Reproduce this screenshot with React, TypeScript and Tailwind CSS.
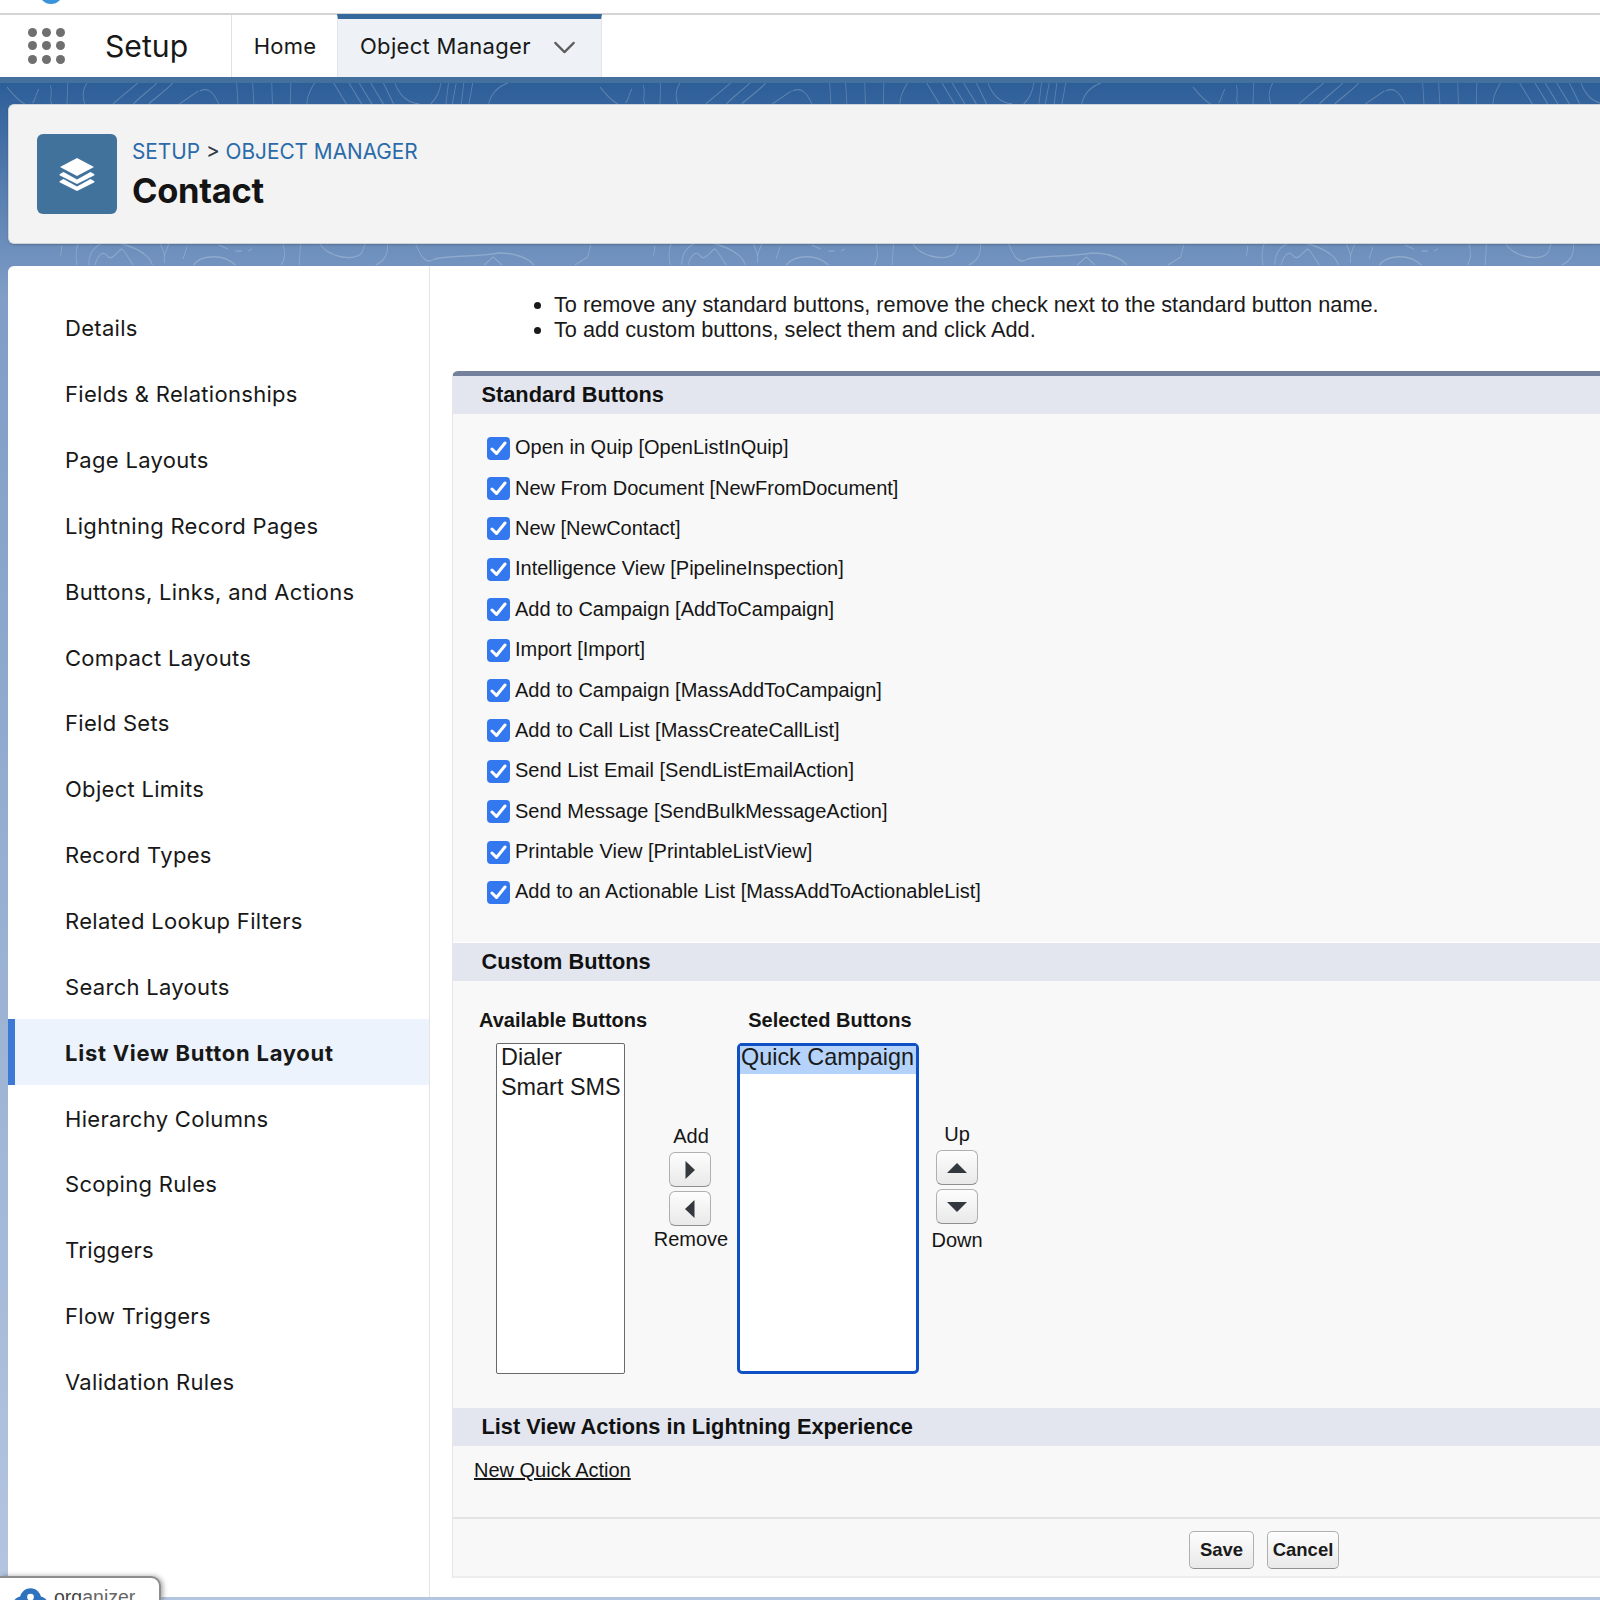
import { ChevronDown } from "lucide-react";

const SANS = "font-['Inter','Noto_Sans',sans-serif]";
const ARIAL = "font-['Liberation_Sans',Arial,sans-serif]";

const SIDE_ITEMS = [
  "Details",
  "Fields & Relationships",
  "Page Layouts",
  "Lightning Record Pages",
  "Buttons, Links, and Actions",
  "Compact Layouts",
  "Field Sets",
  "Object Limits",
  "Record Types",
  "Related Lookup Filters",
  "Search Layouts",
  "List View Button Layout",
  "Hierarchy Columns",
  "Scoping Rules",
  "Triggers",
  "Flow Triggers",
  "Validation Rules",
];

const STANDARD = [
  "Open in Quip [OpenListInQuip]",
  "New From Document [NewFromDocument]",
  "New [NewContact]",
  "Intelligence View [PipelineInspection]",
  "Add to Campaign [AddToCampaign]",
  "Import [Import]",
  "Add to Campaign [MassAddToCampaign]",
  "Add to Call List [MassCreateCallList]",
  "Send List Email [SendListEmailAction]",
  "Send Message [SendBulkMessageAction]",
  "Printable View [PrintableListView]",
  "Add to an Actionable List [MassAddToActionableList]",
];

// contour lines behind the header. one tile is 930 wide, squeezed and repeated along each band
const TOPO_TOP = [
  "M0 4 C10 12 18 18 28 21",
  "M50 6 C44 12 46 16 40 20",
  "M68 2 C72 10 66 16 70 21",
  "M95 0 L94 21",
  "M125 0 C118 8 118 14 122 21",
  "M205 0 C190 8 178 14 166 21",
  "M235 0 C222 8 208 14 198 21",
  "M260 0 C248 8 234 14 222 21",
  "M300 8 C290 12 282 16 270 21",
  "M302 8 C312 5 322 6 332 21",
  "M360 0 L362 21",
  "M385 0 L387 21",
  "M415 0 L416 21",
  "M445 0 L444 21",
  "M482 0 C474 8 470 14 470 21",
  "M512 0 L532 21",
  "M536 0 L556 21",
  "M552 0 L572 21",
  "M570 0 L590 21",
  "M590 0 L606 21",
  "M608 0 C616 14 630 20 646 21",
  "M680 0 C678 10 672 16 664 21",
  "M692 0 L688 21",
  "M704 0 L698 21",
  "M716 0 L712 21",
  "M730 0 L724 21",
  "M785 0 C768 4 758 12 755 21",
];
const TOPO_BOTTOM = [
  "M86 3 L84 13",
  "M112 0 C106 8 108 16 110 22",
  "M128 22 C128 4 150 -4 175 0 C200 4 222 10 228 22",
  "M138 22 C142 12 150 8 156 12 C164 20 172 8 180 6 C188 10 190 16 198 22",
  "M240 0 L247 12 L254 0",
  "M247 12 L247 20",
  "M282 4 L276 16",
  "M332 2 L346 6",
  "M358 8 L368 8",
  "M378 8 L384 6",
  "M292 22 C304 12 338 10 358 22",
  "M432 0 C436 8 436 16 430 22",
  "M460 0 L458 22",
  "M490 0 C498 12 540 20 556 10 L562 0",
  "M596 0 C598 10 592 18 578 22",
  "M640 0 C648 14 658 22 670 16 C700 12 740 14 770 10 C800 10 818 16 826 22",
  "M748 22 L762 14 L776 22",
  "M915 2 L910 14 L890 22",
];

function TopoLines() {
  return (
    <svg className="absolute inset-0" width="1600" height="190" fill="none" stroke="#ffffff" strokeOpacity="0.22" strokeWidth="1.3">
      {[-2, -1, 0, 1].map((k) => (
        <g key={k} transform={`translate(${600 + k * 593} 0) scale(0.638 1)`}>
          {TOPO_TOP.map((d) => <path key={d} d={d} />)}
          <g transform="translate(0 160)">
            {TOPO_BOTTOM.map((d) => <path key={d} d={d} />)}
          </g>
        </g>
      ))}
    </svg>
  );
}

function AppDots() {
  return (
    <div className="grid w-[37px] grid-cols-3 gap-x-[5px] gap-y-[4.5px]">
      {Array.from({ length: 9 }).map((_, i) => (
        <span key={i} className="h-[9px] w-[9px] rounded-full bg-[#6f6f6f]" />
      ))}
    </div>
  );
}

function TopNav() {
  return (
    <div className={`${SANS} relative z-10 flex h-[63px] items-stretch bg-white text-[#181818]`}>
      <div className="flex w-[232px] items-center border-r border-[#e2e2e2]">
        <div className="ml-[28px]"><AppDots /></div>
        <span className="ml-[40px] pt-[1px] text-[30.2px] leading-none">Setup</span>
      </div>
      <div className="flex w-[105px] items-center justify-center pt-[2px] pl-[1px] text-[22px] tracking-[0.2px]">Home</div>
      <div className="-mt-[1px] flex w-[265px] items-center border-x border-t-[5px] border-x-[#e2e5ea] border-t-[#34699c] bg-[#eef1f5] pb-[3px] pl-[22px] text-[22px] tracking-[0.3px]">
        <span>Object Manager</span>
        <ChevronDown className="ml-[15px] mt-[2px] shrink-0 text-[#5c5c5c]" size={37} strokeWidth={1.4} />
      </div>
    </div>
  );
}

function PageHeader() {
  return (
    <div className="flex h-[140px] items-center rounded-l-[6px] border border-r-0 border-[#cfd4da] bg-[#f3f3f3] pl-[28px] shadow-[0_1px_2px_rgba(0,0,0,0.2)]">
      <div className="flex h-[80px] w-[80px] items-center justify-center rounded-[6px] bg-[#41729c]">
        <svg width="36" height="34" viewBox="0 0 36 34" fill="#ffffff">
          <path d="M18 1 L35 10 L18 19 L1 10 Z" />
          <path d="M4.5 15 L1 17 C0.4 17.4 0.4 18.2 1 18.6 L18 27 L35 18.6 C35.6 18.2 35.6 17.4 35 17 L31.5 15 L18 22.5 Z" />
          <path d="M4.5 22 L1 24 C0.4 24.4 0.4 25.2 1 25.6 L18 34 L35 25.6 C35.6 25.2 35.6 24.4 35 24 L31.5 22 L18 29.5 Z" />
        </svg>
      </div>
      <div className={`${SANS} ml-[15px] pt-[2px]`}>
        <div className="text-[20.8px] leading-[26px] text-[#2f3b45]">
          <span className="text-[#2a6aa8]">SETUP</span> &gt; <span className="text-[#2a6aa8]">OBJECT MANAGER</span>
        </div>
        <h1 className="mt-[6px] text-[34.5px] font-bold leading-[40px] tracking-[-0.3px] text-[#141414]">Contact</h1>
      </div>
    </div>
  );
}

function Sidebar() {
  return (
    <nav className={`${SANS} w-[422px] shrink-0 border-r border-[#e4e4e4] pt-[30px] text-[22px] text-[#181818]`}>
      {SIDE_ITEMS.map((item) => {
        const active = item === "List View Button Layout";
        return (
          <div
            key={item}
            className={
              active
                ? "-mt-[1px] mb-[1px] flex h-[65.85px] items-center border-l-[7px] border-[#3b79d4] bg-[#ecf3fd] pl-[50px] pt-[2px] font-bold tracking-[0.74px]"
                : "flex h-[65.85px] items-center pl-[57px] tracking-[0.3px]"
            }
          >
            {item}
          </div>
        );
      })}
    </nav>
  );
}

function SectionHead({ title }: { title: string }) {
  return (
    <div className="flex h-[38px] items-center bg-[#e3e6ef] pl-[28.5px] text-[21.75px] font-bold text-[#111111]">
      {title}
    </div>
  );
}

function CheckRow({ label }: { label: string }) {
  return (
    <div className="flex h-[40.4px] items-center pl-[34px]">
      <span className="flex h-[23px] w-[23px] items-center justify-center rounded-[4px] bg-[#3478f0]">
        <svg width="17" height="15" viewBox="0 0 17 15" fill="none" stroke="#ffffff" strokeWidth="3" strokeLinecap="round" strokeLinejoin="round">
          <path d="M2 8 L6.5 12.5 L15 2" />
        </svg>
      </span>
      <span className="ml-[5px] -translate-y-[1px] text-[20px] text-[#151515]">{label}</span>
    </div>
  );
}

function ArrowBtn({ d }: { d: string }) {
  return (
    <div className="flex h-[35px] w-[42px] items-center justify-center rounded-[6px] border-[1.5px] border-[#b0b0b0] border-b-[#8f8f8f] bg-gradient-to-b from-[#fdfdfd] to-[#e9e9e9]">
      <svg width="24" height="24" viewBox="0 0 24 24" fill="#33383e"><path d={d} /></svg>
    </div>
  );
}

function CustomButtons() {
  return (
    <div className="h-[427px] text-[#151515]">
      <div className="flex pt-[27px] text-[20px] font-bold leading-[24px]">
        <span className="ml-[26px]">Available Buttons</span>
        <span className="ml-[101px]">Selected Buttons</span>
      </div>
      <div className="mt-[11px] flex items-start">
        <div className="ml-[43px] h-[331px] w-[129px] shrink-0 rounded-[2px] border-[1.5px] border-[#6a6a6a] bg-white pl-[4px] text-[23.4px] leading-[29.5px] text-[#1a1a1a]">
          <div className="-mt-[1px]">Dialer</div>
          <div className="whitespace-nowrap">Smart SMS</div>
        </div>
        <div className="flex w-[112px] shrink-0 flex-col items-center pl-[20px] pt-[81px] text-[20px] leading-[24px]">
          <span>Add</span>
          <div className="mt-[4px] mb-[4px] -translate-x-[1px]"><ArrowBtn d="M7.5 3 L17 12 L7.5 21 Z" /></div>
          <div className="-translate-x-[1px]"><ArrowBtn d="M16.5 3 L7 12 L16.5 21 Z" /></div>
          <span className="mt-[1px]">Remove</span>
        </div>
        <div className="h-[331px] w-[182px] shrink-0 rounded-[5px] border-[3px] border-[#0f50c4] bg-white text-[23.4px] leading-[23px] text-[#1a1a1a]">
          <div className="whitespace-nowrap bg-[#b5d3fa] pb-[5px] pl-[1px]">Quick Campaign</div>
        </div>
        <div className="ml-[17px] flex w-[42px] shrink-0 flex-col items-center pt-[79px] text-[20px] leading-[24px]">
          <span>Up</span>
          <div className="mt-[4px] mb-[4px]"><ArrowBtn d="M2 17 L12 7 L22 17 Z" /></div>
          <ArrowBtn d="M2 7 L12 17 L22 7 Z" />
          <span className="mt-[4px]">Down</span>
        </div>
      </div>
    </div>
  );
}

function FooterBtn({ label, width }: { label: string; width: string }) {
  return (
    <div className={`${width} flex h-[38px] items-center justify-center rounded-[5px] border-[1.5px] border-[#b0b0b0] border-b-[#8f8f8f] bg-gradient-to-b from-[#fdfdfd] to-[#e9e9e9] text-[18.5px] font-bold text-[#1a1a1a]`}>
      {label}
    </div>
  );
}

function ButtonLayoutForm() {
  return (
    <div className={`${ARIAL} flex-1 pl-[22px]`}>
      <ul className="h-[105px] list-disc pl-[102px] pt-[26px] text-[21.73px] leading-[25px] text-[#1a1a1a]">
        <li>To remove any standard buttons, remove the check next to the standard button name.</li>
        <li>To add custom buttons, select them and click Add.</li>
      </ul>
      <div className="rounded-tl-[6px] border-l border-t-[5px] border-l-[#e6e6e6] border-t-[#75809c] bg-[#f8f8f8]">
        <SectionHead title="Standard Buttons" />
        <div className="h-[529px] border-b border-white pt-[14px]">
          {STANDARD.map((s) => <CheckRow key={s} label={s} />)}
        </div>
        <SectionHead title="Custom Buttons" />
        <CustomButtons />
        <SectionHead title="List View Actions in Lightning Experience" />
        <div className="h-[73px] border-b-2 border-[#e4e4e4] pl-[21px] pt-[9px] text-[20px] text-[#151515] underline">
          New Quick Action
        </div>
        <div className="flex h-[59px] items-start border-b-2 border-[#ededed] pl-[736px] pt-[12px]">
          <FooterBtn label="Save" width="w-[65px]" />
          <div className="ml-[13px]"><FooterBtn label="Cancel" width="w-[72px]" /></div>
        </div>
      </div>
    </div>
  );
}

function OrganizerTab() {
  return (
    <div className="absolute bottom-0 left-0 z-20 flex h-[24px] w-[161px] items-start rounded-tr-[10px] border-r-2 border-t-2 border-[#8d8d8d] bg-white pl-[13px] pt-[10px] shadow-[2px_0_5px_rgba(0,0,0,0.35)]">
      <svg width="35" height="26" viewBox="0 0 36 26" fill="#2f72bd" className="shrink-0">
        <circle cx="18" cy="11" r="11" />
        <circle cx="9" cy="17" r="9" />
        <circle cx="27" cy="17" r="9" />
        <circle cx="18" cy="9" r="3.5" fill="#ffffff" />
      </svg>
      <span className={`${ARIAL} ml-[6px] -mt-[1px] text-[19.5px] leading-[20px] text-[#666666]`}>
        <span className="text-[#444444]">org</span>anizer
      </span>
    </div>
  );
}

export default function App() {
  return (
    <div className="relative flex h-[1600px] w-[1600px] flex-col overflow-hidden bg-white">
      <div className="relative h-[15px] border-b-2 border-[#d4d4d4] bg-white">
        <span className="absolute -top-[20px] left-[39px] h-[24px] w-[24px] rounded-full bg-[#3a94dc]" />
      </div>
      <TopNav />
      <div className="relative flex-1 border-t-[6px] border-[#44709e] bg-gradient-to-b from-[#2c5e98] via-[#7f9dc6] via-[14%] to-[#b4c5e0] pl-[8px] pt-[21px] pb-[3px]">
        <TopoLines />
        <div className="relative">
          <PageHeader />
          <div className="mt-[22px] flex h-[1331px] rounded-tl-[6px] bg-white">
            <Sidebar />
            <ButtonLayoutForm />
          </div>
        </div>
      </div>
      <OrganizerTab />
    </div>
  );
}
